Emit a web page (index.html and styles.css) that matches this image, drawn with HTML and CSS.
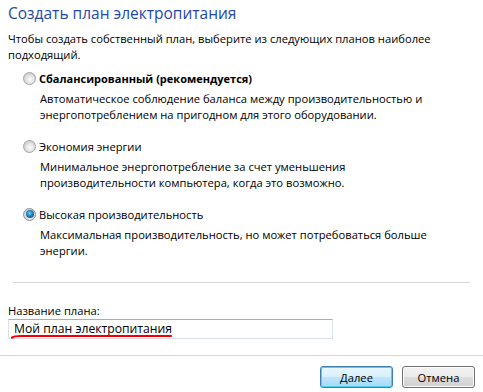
FILE: index.html
```html
<!DOCTYPE html>
<html>
    <head>
        <meta charset=UTF-8>
        <title>Создать план электропитания</title>
        <link rel="stylesheet" href="styles.css">
    </head>
    <body>
        <div class="page">
            <h1 class="title">Создать план электропитания</h1>
            <p class="intro">Чтобы создать собственный план, выберите из следующих планов наиболее подходящий.</p>

            <div class="plans">
                <div class="plan">
                    <div class="plan-head">
                        <span class="radio"></span>
                        <b>Сбалансированный (рекомендуется)</b>
                    </div>
                    <div class="plan-desc">Автоматическое соблюдение баланса между производительностью и энергопотреблением на пригодном для этого оборудовании.</div>
                </div>
                <div class="plan">
                    <div class="plan-head">
                        <span class="radio"></span>
                        <span>Экономия энергии</span>
                    </div>
                    <div class="plan-desc">Минимальное энергопотребление за счет уменьшения<br>производительности компьютера, когда это возможно.</div>
                </div>
                <div class="plan">
                    <div class="plan-head">
                        <span class="radio checked"></span>
                        <span>Высокая производительность</span>
                    </div>
                    <div class="plan-desc">Максимальная производительность, но может потребоваться больше энергии.</div>
                </div>
            </div>

            <div class="sep"></div>

            <div class="name-field">
                <label class="name-label">Название плана:</label>
                <div class="name-box">
                    <span class="name-text">Мой план электропитания</span>
                    <svg class="mark" width="162" height="6" viewBox="0 0 162 6">
                        <path d="M1 4.6 Q 3 3 10 3 L 160 3" fill="none" stroke="#f00000" stroke-width="2.2" stroke-linecap="round"/>
                    </svg>
                </div>
            </div>
        </div>

        <div class="footer">
            <button class="btn default">Далее</button>
            <button class="btn">Отмена</button>
        </div>
    </body>
</html>
```

FILE: styles.css
```css
* {
    box-sizing: border-box;
}

body {
    margin: 0;
    background: #fff;
    font-family: "Open Sans", "Noto Sans", sans-serif;
    font-size: 11.2px;
    color: #000;
    width: 483px;
    height: 392px;
    overflow: hidden;
}

.page {
    padding: 0 8px;
    height: 355px;
}

.title {
    margin: 0;
    padding-top: 2px;
    font-weight: normal;
    font-size: 15.5px;
    line-height: 22px;
    color: #1f48a8;
}

.intro {
    margin: 7px 0 0;
    line-height: 16px;
    width: 440px;
}

.plans {
    margin-top: 7px;
    padding-left: 15px;
    display: flex;
    flex-direction: column;
    gap: 15px;
}

.plan-head {
    display: flex;
    align-items: center;
    gap: 3px;
    height: 16px;
}

.plan-head b {
    font-weight: bold;
    font-size: 11px;
}

.plan-desc {
    margin-top: 5px;
    padding-left: 17px;
    line-height: 16px;
    width: 420px;
}

.radio {
    width: 13px;
    height: 13px;
    border-radius: 50%;
    border: 1px solid #a2a2a2;
    background: radial-gradient(circle at 55% 60%, #fafafa 0, #e6e6e6 40%, #cfcfcf 70%, #f4f4f4 78%);
    position: relative;
    flex: none;
}

.radio.checked {
    border-color: #8a8f96;
}

.radio.checked::after {
    content: "";
    position: absolute;
    left: 1.5px;
    top: 1.5px;
    width: 8px;
    height: 8px;
    border-radius: 50%;
    background: radial-gradient(circle at 45% 40%, #7fd0f5 0, #2a8fd0 35%, #145a96 70%, #0b3a66 100%);
}

.sep {
    margin: 23px 5px 0;
    border-top: 1px solid #d6d6d6;
}

.name-field {
    margin-top: 20px;
}

.name-label {
    display: block;
    line-height: 16px;
}

.name-box {
    position: relative;
    width: 325px;
    height: 20px;
    border: 1px solid #dbdfe6;
    border-top-color: #abadb3;
    padding-left: 5px;
    font-size: 12.2px;
    line-height: 18px;
}

.mark {
    position: absolute;
    left: 2px;
    top: 13px;
}

.footer {
    border-top: 1px solid #d6d6d6;
    display: flex;
    justify-content: flex-end;
    gap: 9px;
    padding: 10px 8px 0 0;
}

.btn {
    width: 73px;
    height: 22px;
    font-family: inherit;
    font-size: 11.2px;
    color: #000;
    border: 1px solid #707070;
    border-radius: 3px;
    background: linear-gradient(#f2f2f2 0, #ebebeb 48%, #dddddd 50%, #cfcfcf 100%);
    box-shadow: inset 0 0 0 1px #fcfcfc;
    padding: 0;
}

.btn.default {
    border-color: #3c7fb1;
    box-shadow: inset 0 0 0 1px #48d2f5;
    background: linear-gradient(#eaf6fd 0, #d9f0fc 48%, #bee6fd 50%, #a7d9f5 100%);
}
```
